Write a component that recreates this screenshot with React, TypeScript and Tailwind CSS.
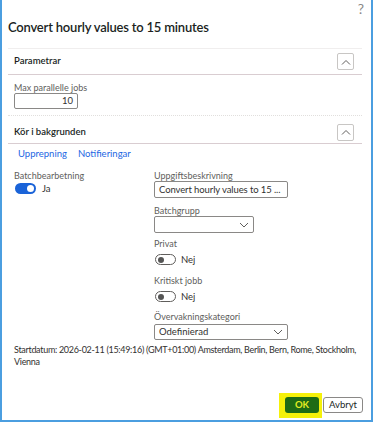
import React from "react";

function Chevron({ dir = "up" }: { dir?: "up" | "down" }) {
  return (
    <svg width="10" height="6" viewBox="0 0 10 6" fill="none">
      {dir === "up" ? (
        <path d="M1 5.5 L5 1.5 L9 5.5" stroke="#605e5c" strokeWidth="1" />
      ) : (
        <path d="M1 1 L5 5 L9 1" stroke="#605e5c" strokeWidth="1" />
      )}
    </svg>
  );
}

function CollapseBtn() {
  return (
    <div className="w-[17px] h-[17px] border border-[#c8c6c4] rounded-[2px] flex items-center justify-center">
      <Chevron dir="up" />
    </div>
  );
}

function Toggle({ on }: { on: boolean }) {
  return on ? (
    <div className="w-[21px] h-[11px] rounded-full bg-[#1a63d8] flex items-center justify-end pr-[2px]">
      <div className="w-[7px] h-[7px] rounded-full bg-white" />
    </div>
  ) : (
    <div className="w-[21px] h-[11px] rounded-full border border-[#605e5c] bg-white flex items-center pl-[2px]">
      <div className="w-[6px] h-[6px] rounded-full bg-[#555]" />
    </div>
  );
}

function Label({ children }: { children: React.ReactNode }) {
  return <div className="text-[9px] leading-[11px] text-[#605e5c]">{children}</div>;
}

export default function App() {
  return (
    <div className="w-[373px] h-[422px] bg-white border-x-2 border-b-2 border-[#4b9ee0] text-[#323130] font-['Lato',sans-serif] flex flex-col">
      <div className="h-[17px] flex justify-end pr-[7px] text-[14px] leading-[17px] text-[#8a8886]">?</div>
      <div className="pl-[6px] text-[13px] leading-[20px] font-semibold text-[#201f1e] tracking-[-0.2px]">
        Convert hourly values to 15 minutes
      </div>

      <div className="ml-[6px] w-[354px] mt-[11px] border-t border-[#f0eeee]">
        <div className="h-[26px] flex items-center justify-between pl-[6px] pr-[8px] border-b border-[#d9cdd1]">
          <span className="text-[9.5px] font-semibold text-[#201f1e]">Parametrar</span>
          <CollapseBtn />
        </div>
        <div className="pl-[6px] pt-[7px] pb-[6px]">
          <Label>Max parallelle jobs</Label>
          <div className="w-[64px] h-[16px] border border-[#8a8886] rounded-[2px] text-[9.5px] leading-[14px] text-right pr-[4px]">10</div>
        </div>
      </div>

      <div className="ml-[6px] w-[354px] border-t border-dotted border-[#e1dfdd]">
        <div className="h-[28px] pt-[5px] flex items-center justify-between pl-[6px] pr-[8px] border-b border-[#d9cdd1]">
          <span className="text-[9.5px] font-semibold text-[#201f1e]">Kör i bakgrunden</span>
          <CollapseBtn />
        </div>
        <div className="flex gap-[11px] pl-[10px] pt-[4px] text-[9.5px] leading-[12px] text-[#2266e3]">
          <span>Upprepning</span>
          <span>Notifieringar</span>
        </div>
        <div className="grid grid-cols-[140px_1fr] pl-[6px] mt-[10px]">
          <div>
            <Label>Batchbearbetning</Label>
            <div className="flex items-center gap-[6px] mt-[2px] pl-[1px]">
              <Toggle on />
              <span className="text-[9.5px] leading-[11px]">Ja</span>
            </div>
          </div>
          <div className="flex flex-col">
            <Label>Uppgiftsbeskrivning</Label>
            <div className="w-[134px] h-[17px] border border-[#8a8886] rounded-[2px] text-[9.5px] leading-[15px] pl-[4px] whitespace-nowrap overflow-hidden tracking-[-0.1px]">
              Convert hourly values to 15 ...
            </div>
            <div className="mt-[7px]"><Label>Batchgrupp</Label></div>
            <div className="w-[100px] h-[17px] border border-[#8a8886] rounded-[2px] flex items-center justify-end pr-[4px]">
              <Chevron dir="down" />
            </div>
            <div className="mt-[5px]"><Label>Privat</Label></div>
            <div className="flex items-center gap-[5px] mt-[5px] pl-[1px]">
              <Toggle on={false} />
              <span className="text-[9.5px] leading-[11px]">Nej</span>
            </div>
            <div className="mt-[10px]"><Label>Kritiskt jobb</Label></div>
            <div className="flex items-center gap-[5px] mt-[5px] pl-[1px]">
              <Toggle on={false} />
              <span className="text-[9.5px] leading-[11px]">Nej</span>
            </div>
            <div className="mt-[9px]"><Label>Övervakningskategori</Label></div>
            <div className="mt-[2px] w-[134px] h-[16px] border border-[#8a8886] rounded-[2px] flex items-center justify-between pl-[4px] pr-[4px]">
              <span className="text-[9.5px] leading-[14px]">Odefinierad</span>
              <Chevron dir="down" />
            </div>
          </div>
        </div>
        <div className="pl-[6px] pr-[2px] mt-[4px] text-[9px] leading-[12px] tracking-[-0.3px] text-[#323130]">
          Startdatum: 2026-02-11 (15:49:16) (GMT+01:00) Amsterdam, Berlin, Bern, Rome, Stockholm, Vienna
        </div>
      </div>

      <div className="flex-1" />
      <div className="flex items-end justify-end pr-[8px] pb-[2px]">
        <div className="bg-[#f5f10a] pl-[6px] pr-[3px] pt-[4px] pb-[5px]">
          <div className="w-[34px] h-[16px] rounded-[3px] bg-[#1e6b15] text-[#e3ec22] text-[9.5px] font-bold leading-[16px] text-center">OK</div>
        </div>
        <div className="ml-[1px] mb-[5px] w-[40px] h-[16px] rounded-[3px] border border-[#8a8886] text-[9.5px] leading-[14px] text-center text-[#201f1e]">Avbryt</div>
      </div>
    </div>
  );
}
